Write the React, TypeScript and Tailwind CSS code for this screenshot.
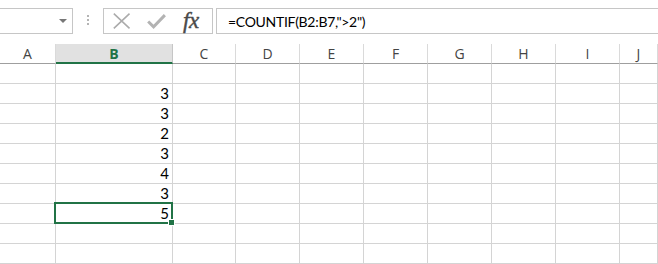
const cols = [
  { name: "A", w: "w-[56px]" },
  { name: "B", w: "w-[117px]" },
  { name: "C", w: "w-[63px]" },
  { name: "D", w: "w-[64px]" },
  { name: "E", w: "w-[64px]" },
  { name: "F", w: "w-[64px]" },
  { name: "G", w: "w-[64px]" },
  { name: "H", w: "w-[64px]" },
  { name: "I", w: "w-[64px]" },
  { name: "J", w: "flex-1" },
];

const values = ["", "3", "3", "2", "3", "4", "3", "5", "", ""];

function FormulaBar() {
  return (
    <div className="flex h-[44px] items-start pt-[8px] bg-white">
      <div className="relative h-[26px] w-[73px] border border-l-0 border-[#c6c6c6]">
        <div className="absolute left-[59px] top-[10px] h-0 w-0 border-x-[4px] border-t-[4px] border-x-transparent border-t-[#777]" />
      </div>
      <div className="flex w-[30px] flex-col items-center gap-[2px] pt-[7px]">
        <span className="h-[2px] w-[2px] bg-[#b4b4b4]" />
        <span className="h-[2px] w-[2px] bg-[#b4b4b4]" />
        <span className="h-[2px] w-[2px] bg-[#b4b4b4]" />
      </div>
      <div className="relative flex h-[26px] w-[110px] items-center border border-[#c6c6c6]">
        <svg width="110" height="24" viewBox="0 0 110 24">
          <path d="M10 4.5 L26 19.5 M26 4.5 L10 19.5" stroke="#ababab" strokeWidth="1.6" fill="none" />
          <path d="M45 12.5 L50.5 18 L62 6" stroke="#b3b3b3" strokeWidth="3" fill="none" />
        </svg>
        <span className="absolute left-[79px] top-[-1px] font-['Liberation_Serif',serif] text-[23px] italic leading-[26px] text-[#4a4a4a] tracking-[-0.5px] [-webkit-text-stroke:0.4px_#4a4a4a]">
          fx
        </span>
      </div>
      <div className="ml-[3px] flex h-[26px] flex-1 items-center border border-r-0 border-[#c6c6c6] pl-[11px] font-['Lato',sans-serif] text-[14px] tracking-[-0.3px] text-black">
        =COUNTIF(B2:B7,"&gt;2")
      </div>
    </div>
  );
}

export default function App() {
  return (
    <div className="relative h-[264px] w-[658px] overflow-hidden bg-white">
      <FormulaBar />
      <div className="flex h-[20px]">
        {cols.map((c) => (
          <div
            key={c.name}
            className={
              c.name === "B"
                ? `${c.w} flex items-center justify-center border-r border-[#c6c6c6] border-b-2 border-b-[#217346] bg-[#e1e1e1] font-['Open_Sans',sans-serif] text-[14px] font-bold text-[#217346]`
                : `${c.w} flex items-center justify-center border-r border-[#dadada] border-b border-b-[#9f9f9f] font-['Open_Sans',sans-serif] text-[14px] text-[#444]`
            }
          >
            {c.name}
          </div>
        ))}
      </div>
      {values.map((v, i) => (
        <div key={i} className="flex h-[20px]">
          {cols.map((c) => (
            <div
              key={c.name}
              className={`${c.w} flex items-end justify-end border-b border-r border-[#d4d4d4] pr-[3px] font-['Lato',sans-serif] text-[15px] leading-[19px] text-black`}
            >
              {c.name === "B" ? v : ""}
            </div>
          ))}
        </div>
      ))}
      <div className="absolute left-[54px] top-[202px] h-[22px] w-[119px] border-2 border-[#217346]" />
      <div className="absolute left-[168px] top-[219px] h-[7px] w-[7px] border border-white bg-[#217346]" />
    </div>
  );
}
